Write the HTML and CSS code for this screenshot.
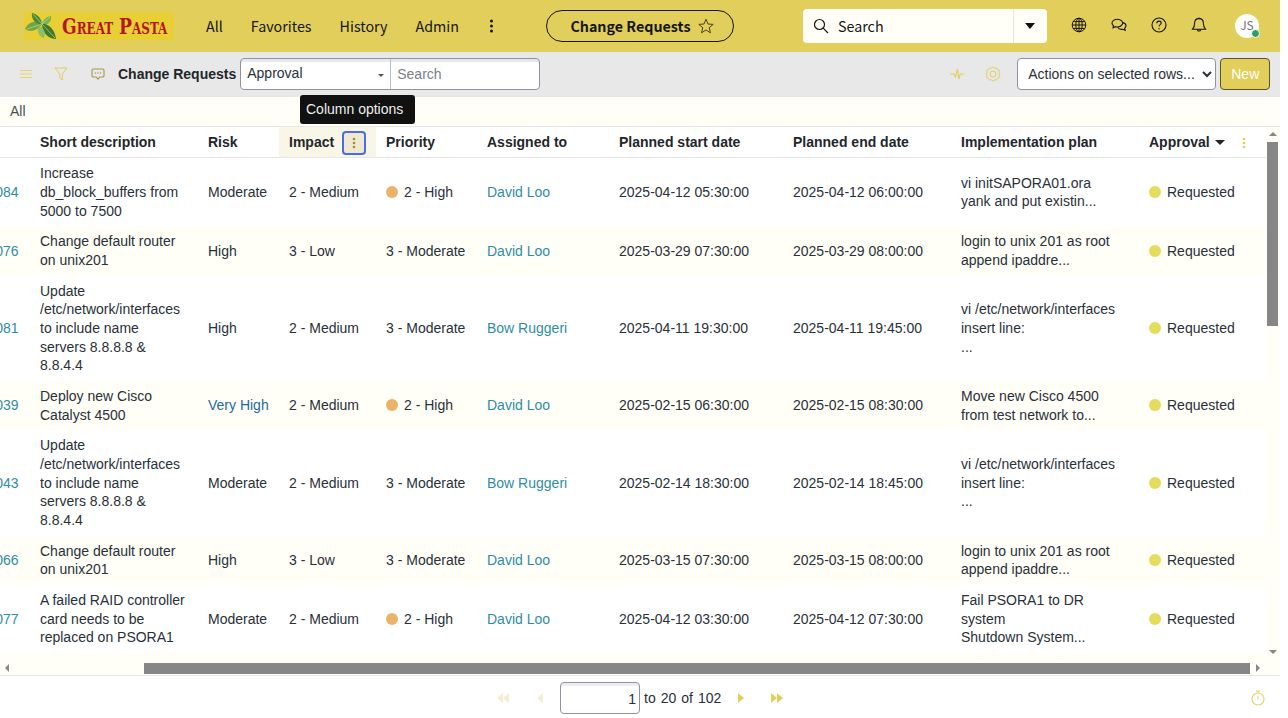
FILE: index.html
```html
<!DOCTYPE html>
<html lang="en">
<head>
    <meta charset="UTF-8">
    <title>Change Requests</title>
    <link rel="stylesheet" href="styles.css">
</head>
<body>
<div class="page">
    <!-- Top navigation -->
    <header class="topbar">
        <div class="logo">
            <svg class="logo-leaf" viewBox="0 0 34 28" width="34" height="28">
                <path d="M1 17 C5 9 12 8 18 12 C14 18 7 21 1 17Z" fill="#6fa544"/>
                <path d="M8 1 C13 2 18 6 18 13 C12 12 7 8 8 1Z" fill="#4f8a33"/>
                <path d="M27 4 C28 9 24 13 18 14 C18 9 21 5 27 4Z" fill="#7cb052"/>
                <path d="M18 12 C25 11 31 18 32 27 C25 27 18 21 18 12Z" fill="#3f7a2b"/>
                <path d="M15 14 C20 15 22 21 20 26 C15 25 12 19 15 14Z" fill="#8fbf62"/>
                <path d="M3 17 L18 12 M18 12 L31 26 M18 12 L26 5 M18 12 L9 2" stroke="#cfe0a6" stroke-width="0.6" fill="none"/>
            </svg>
            <span class="logo-text">Great Pasta</span>
        </div>
        <nav class="nav">
            <span>All</span>
            <span>Favorites</span>
            <span>History</span>
            <span>Admin</span>
            <svg class="nav-dots" viewBox="0 0 9 16" width="9" height="16" fill="#151515">
                <circle cx="4.5" cy="3" r="1.5"/><circle cx="4.5" cy="8" r="1.5"/><circle cx="4.5" cy="13" r="1.5"/>
            </svg>
        </nav>
        <div class="pill">
            <span>Change Requests</span>
            <svg viewBox="0 0 16 16" width="16" height="16" fill="none" stroke="#4a4320" stroke-width="1">
                <path d="M8 1.2 L10 6 L15.2 6.4 L11.2 9.7 L12.5 14.8 L8 12 L3.5 14.8 L4.8 9.7 L0.8 6.4 L6 6Z"/>
            </svg>
        </div>
        <div class="global-search">
            <svg viewBox="0 0 16 16" width="16" height="16" fill="none" stroke="#151515" stroke-width="1.2">
                <circle cx="6.5" cy="6.5" r="5"/><path d="M10.2 10.2 L15 15"/>
            </svg>
            <span class="global-search-text">Search</span>
            <span class="global-search-drop"><i class="caret-black"></i></span>
        </div>
        <div class="top-icons">
            <svg viewBox="0 0 16 16" width="16" height="16" fill="none" stroke="#151515" stroke-width="1">
                <circle cx="8" cy="8" r="6.8"/><ellipse cx="8" cy="8" rx="3.2" ry="6.8"/>
                <path d="M8 1.2 V14.8 M1.2 8 H14.8 M2.2 4.6 H13.8 M2.2 11.4 H13.8"/>
            </svg>
            <svg viewBox="0 0 16 16" width="16" height="16" fill="none" stroke="#151515" stroke-width="1.1">
                <path d="M6.5 2.2 C3.4 2.2 1 3.9 1 6.1 C1 7.2 1.6 8.1 2.5 8.8 L2 10.8 L4.6 9.7 C6.8 10.2 10 9.5 11.4 7.2 C12.6 5 10 2.2 6.5 2.2Z"/>
                <path d="M11.6 5.6 C13.6 6 15 7.2 15 8.8 C15 9.8 14.5 10.6 13.7 11.2 L14.2 13.2 L11.8 12.2 C9.8 12.6 7.6 12 6.8 10.1"/>
            </svg>
            <svg viewBox="0 0 16 16" width="16" height="16" fill="none" stroke="#151515" stroke-width="1.1">
                <circle cx="8" cy="8" r="7"/>
                <path d="M5.8 6.2 C5.8 4.9 6.8 4.1 8 4.1 C9.3 4.1 10.2 5 10.2 6 C10.2 7.6 8 7.7 8 9.6"/>
                <circle cx="8" cy="11.8" r="0.7" fill="#151515" stroke="none"/>
            </svg>
            <svg viewBox="0 0 16 16" width="16" height="16" fill="none" stroke="#151515" stroke-width="1.1">
                <path d="M8 1.6 C5.2 1.6 3.6 3.6 3.6 6.2 C3.6 9.4 2.8 10.8 1.6 12.2 H14.4 C13.2 10.8 12.4 9.4 12.4 6.2 C12.4 3.6 10.8 1.6 8 1.6Z"/>
                <path d="M6.4 12.4 C6.4 14.6 9.6 14.6 9.6 12.4 M8 0.6 V1.6"/>
            </svg>
        </div>
        <div class="avatar">
            JS
            <span class="avatar-badge"></span>
        </div>
    </header>

    <!-- List toolbar -->
    <div class="toolbar">
        <svg class="tool-menu" viewBox="0 0 14 10" width="14" height="10" stroke="#e4d36f" stroke-width="1">
            <path d="M1 1.5 H13 M1 5 H13 M1 8.5 H13"/>
        </svg>
        <svg class="tool-filter" viewBox="0 0 14 14" width="14" height="14" fill="none" stroke="#e2ce5a" stroke-width="1">
            <path d="M1 1 H13 L8.4 7 V13 L5.8 11 V7Z"/>
        </svg>
        <svg class="tool-chat" viewBox="0 0 14 14" width="14" height="14" fill="none" stroke="#a8944a" stroke-width="1.1">
            <path d="M2.5 2 H11.5 Q13 2 13 3.5 V9 Q13 10 11.5 10 H8.8 L7 12.2 L5.2 10 H2.5 Q1 10 1 9 V3.5 Q1 2 2.5 2Z"/>
            <circle cx="4.4" cy="6" r="0.7" fill="#a8944a" stroke="none"/><circle cx="7" cy="6" r="0.7" fill="#a8944a" stroke="none"/><circle cx="9.6" cy="6" r="0.7" fill="#a8944a" stroke="none"/>
        </svg>
        <span class="tool-title">Change Requests</span>
        <div class="field-group">
            <div class="field-select">Approval<i class="caret-small"></i></div>
            <input class="field-input" type="text" placeholder="Search">
        </div>
        <svg class="tool-pulse" viewBox="0 0 16 16" width="16" height="16" fill="none" stroke="#e2ce5a" stroke-width="1.1">
            <path d="M1 8 H5 L6.5 11 L8.5 3 L9.8 13 L11.2 8 H15"/>
        </svg>
        <svg class="tool-gear" viewBox="0 0 16 16" width="16" height="16" fill="none" stroke="#e2ce5a" stroke-width="1">
            <path d="M8 1 L9.6 2.2 L11.6 1.9 L12.5 3.6 L14.3 4.4 L14 6.4 L15 8 L14 9.6 L14.3 11.6 L12.5 12.4 L11.6 14.1 L9.6 13.8 L8 15 L6.4 13.8 L4.4 14.1 L3.5 12.4 L1.7 11.6 L2 9.6 L1 8 L2 6.4 L1.7 4.4 L3.5 3.6 L4.4 1.9 L6.4 2.2Z"/>
            <circle cx="8" cy="8" r="3"/>
        </svg>
        <select class="actions">
            <option>Actions on selected rows...</option>
        </select>
        <button class="btn-new">New</button>
    </div>

    <div class="breadcrumb">All</div>
    <div class="tooltip">Column options</div>

    <!-- Records -->
    <div class="list-area">
        <div class="table-clip">
            <table class="records">
                <colgroup>
                    <col class="c-num"><col class="c-desc"><col class="c-risk"><col class="c-impact"><col class="c-prio">
                    <col class="c-user"><col class="c-date"><col class="c-date2"><col class="c-plan"><col class="c-appr">
                </colgroup>
                <thead>
                    <tr>
                        <th></th>
                        <th>Short description</th>
                        <th>Risk</th>
                        <th class="th-active">
                            <div class="th-inner">Impact
                                <span class="col-btn"><svg viewBox="0 0 4 12" width="4" height="12" fill="#a8893a"><circle cx="2" cy="2" r="1.3"/><circle cx="2" cy="6" r="1.3"/><circle cx="2" cy="10" r="1.3"/></svg></span>
                            </div>
                        </th>
                        <th>Priority</th>
                        <th>Assigned to</th>
                        <th>Planned start date</th>
                        <th>Planned end date</th>
                        <th>Implementation plan</th>
                        <th>
                            <div class="th-inner th-appr">Approval <i class="caret-sort"></i>
                                <svg class="th-dots" viewBox="0 0 4 12" width="4" height="12" fill="#e2ce5a"><circle cx="2" cy="2" r="1.3"/><circle cx="2" cy="6" r="1.3"/><circle cx="2" cy="10" r="1.3"/></svg>
                            </div>
                        </th>
                    </tr>
                </thead>
                <tbody>
                    <tr>
                        <td><a>CHG0000084</a></td>
                        <td>Increase db_block_buffers from 5000 to 7500</td>
                        <td>Moderate</td>
                        <td>2 - Medium</td>
                        <td><i class="dot dot-high"></i>2 - High</td>
                        <td><a>David Loo</a></td>
                        <td>2025-04-12 05:30:00</td>
                        <td>2025-04-12 06:00:00</td>
                        <td>vi initSAPORA01.ora<br>yank and put existin...</td>
                        <td><i class="dot dot-req"></i>Requested</td>
                    </tr>
                    <tr>
                        <td><a>CHG0000076</a></td>
                        <td>Change default router on unix201</td>
                        <td>High</td>
                        <td>3 - Low</td>
                        <td>3 - Moderate</td>
                        <td><a>David Loo</a></td>
                        <td>2025-03-29 07:30:00</td>
                        <td>2025-03-29 08:00:00</td>
                        <td>login to unix 201 as root<br>append ipaddre...</td>
                        <td><i class="dot dot-req"></i>Requested</td>
                    </tr>
                    <tr>
                        <td><a>CHG0000081</a></td>
                        <td>Update /etc/network/interfaces to include name servers 8.8.8.8 &amp; 8.8.4.4</td>
                        <td>High</td>
                        <td>2 - Medium</td>
                        <td>3 - Moderate</td>
                        <td><a>Bow Ruggeri</a></td>
                        <td>2025-04-11 19:30:00</td>
                        <td>2025-04-11 19:45:00</td>
                        <td>vi /etc/network/interfaces<br>insert line:<br>...</td>
                        <td><i class="dot dot-req"></i>Requested</td>
                    </tr>
                    <tr>
                        <td><a>CHG0000039</a></td>
                        <td>Deploy new Cisco Catalyst 4500</td>
                        <td><a class="link-dark">Very High</a></td>
                        <td>2 - Medium</td>
                        <td><i class="dot dot-high"></i>2 - High</td>
                        <td><a>David Loo</a></td>
                        <td>2025-02-15 06:30:00</td>
                        <td>2025-02-15 08:30:00</td>
                        <td>Move new Cisco 4500<br>from test network to...</td>
                        <td><i class="dot dot-req"></i>Requested</td>
                    </tr>
                    <tr>
                        <td><a>CHG0000043</a></td>
                        <td>Update /etc/network/interfaces to include name servers 8.8.8.8 &amp; 8.8.4.4</td>
                        <td>Moderate</td>
                        <td>2 - Medium</td>
                        <td>3 - Moderate</td>
                        <td><a>Bow Ruggeri</a></td>
                        <td>2025-02-14 18:30:00</td>
                        <td>2025-02-14 18:45:00</td>
                        <td>vi /etc/network/interfaces<br>insert line:<br>...</td>
                        <td><i class="dot dot-req"></i>Requested</td>
                    </tr>
                    <tr>
                        <td><a>CHG0000066</a></td>
                        <td>Change default router on unix201</td>
                        <td>High</td>
                        <td>3 - Low</td>
                        <td>3 - Moderate</td>
                        <td><a>David Loo</a></td>
                        <td>2025-03-15 07:30:00</td>
                        <td>2025-03-15 08:00:00</td>
                        <td>login to unix 201 as root<br>append ipaddre...</td>
                        <td><i class="dot dot-req"></i>Requested</td>
                    </tr>
                    <tr>
                        <td><a>CHG0000077</a></td>
                        <td>A failed RAID controller card needs to be replaced on PSORA1</td>
                        <td>Moderate</td>
                        <td>2 - Medium</td>
                        <td><i class="dot dot-high"></i>2 - High</td>
                        <td><a>David Loo</a></td>
                        <td>2025-04-12 03:30:00</td>
                        <td>2025-04-12 07:30:00</td>
                        <td>Fail PSORA1 to DR<br>system<br>Shutdown System...</td>
                        <td><i class="dot dot-req"></i>Requested</td>
                    </tr>
                </tbody>
            </table>
        </div>
        <div class="vbar">
            <i class="arrow-up"></i>
            <div class="vbar-track"><div class="vbar-thumb"></div></div>
            <i class="arrow-down"></i>
        </div>
    </div>
    <div class="hbar">
        <i class="arrow-left"></i>
        <div class="hbar-track"><div class="hbar-thumb"></div></div>
        <i class="arrow-right"></i>
    </div>

    <!-- Pagination -->
    <footer class="pager">
        <div class="pager-main">
            <span class="pg-btn pg-first"><i class="tri-left faded"></i><i class="tri-left faded"></i></span>
            <span class="pg-btn pg-prev"><i class="tri-left faded"></i></span>
            <input class="pg-input" type="text" value="1">
            <span class="pg-text">to</span>
            <span class="pg-text">20</span>
            <span class="pg-text">of</span>
            <span class="pg-text">102</span>
            <span class="pg-btn pg-next"><i class="tri-right"></i></span>
            <span class="pg-btn pg-last"><i class="tri-right"></i><i class="tri-right"></i></span>
        </div>
        <svg class="pg-timer" viewBox="0 0 14 16" width="14" height="16" fill="none" stroke="#e8d675" stroke-width="1.2">
            <circle cx="7" cy="9" r="6"/><path d="M5 1.2 H9 M7 1.2 V3 M7 6 V9.5"/>
        </svg>
    </footer>
</div>
</body>
</html>
```

FILE: styles.css
```css
/* Page frame */
body {
    margin: 0;
    background-color: #fff;
    font-family: "Liberation Sans", Arial, sans-serif;
    font-size: 14px;
    color: #293038;
    overflow: hidden;
}
.page {
    position: relative;
    width: 1280px;
    height: 718px;
    display: flex;
    flex-direction: column;
}

/* Top navigation */
.topbar {
    height: 52px;
    flex: none;
    display: flex;
    align-items: center;
    background-color: #e2ce5a;
    font-family: "Noto Sans CJK SC", "Noto Sans", sans-serif;
    font-size: 14.3px;
    color: #151515;
}
.logo {
    width: 150px;
    height: 28px;
    margin-left: 24px;
    display: flex;
    align-items: center;
    background-color: #e8cf35;
}
.logo-leaf {
    flex: none;
    margin-left: 0;
}
.logo-text {
    margin-left: 4px;
    font-family: "DejaVu Serif Condensed", "DejaVu Serif", serif;
    font-weight: bold;
    font-variant: small-caps;
    font-size: 23px;
    line-height: 28px;
    color: #b5161d;
    white-space: nowrap;
    transform: scaleX(0.83);
    transform-origin: left center;
}
.nav {
    margin-left: 32px;
    display: flex;
    align-items: center;
    gap: 28px;
    line-height: 24px;
}
.pill {
    width: 188px;
    height: 32px;
    box-sizing: border-box;
    margin-left: 50px;
    padding-left: 4px;
    display: flex;
    align-items: center;
    justify-content: center;
    gap: 7px;
    border: 1px solid #151515;
    border-radius: 16px;
    font-weight: bold;
    line-height: 24px;
}
.global-search {
    width: 244px;
    height: 34px;
    box-sizing: border-box;
    margin-left: 69px;
    padding-left: 10px;
    display: flex;
    align-items: center;
    background-color: #fffef7;
    border-radius: 4px;
}
.global-search-text {
    margin-left: 9px;
    line-height: 24px;
    flex: 1;
}
.global-search-drop {
    width: 33px;
    height: 34px;
    display: flex;
    align-items: center;
    justify-content: center;
    border-left: 1px solid #e6e6de;
}
.caret-black {
    border-left: 5.5px solid transparent;
    border-right: 5.5px solid transparent;
    border-top: 6px solid #111;
}
.top-icons {
    margin-left: 24px;
    display: flex;
    align-items: center;
    gap: 24px;
    margin-top: -2px;
}
.top-icons svg {
    display: block;
}
.avatar {
    position: relative;
    width: 24px;
    height: 24px;
    margin-left: 28px;
    border-radius: 50%;
    background-color: #fff;
    font-size: 12px;
    line-height: 22px;
    text-align: center;
    color: #6d7177;
}
.avatar-badge {
    position: absolute;
    right: -1px;
    bottom: 0;
    width: 7px;
    height: 7px;
    border: 1px solid #fff;
    border-radius: 50%;
    background-color: #2f9e63;
}

/* List toolbar */
.toolbar {
    height: 45px;
    flex: none;
    box-sizing: border-box;
    padding-bottom: 1px;
    display: flex;
    align-items: center;
    background-color: #e8e8e8;
}
.tool-menu { margin-left: 19px; }
.tool-filter { margin-left: 21px; }
.tool-chat { margin-left: 23px; }
.tool-title {
    margin-left: 13px;
    font-weight: bold;
    color: #22262b;
    white-space: nowrap;
}
.field-group {
    margin-left: 4px;
    width: 300px;
    height: 32px;
    box-sizing: border-box;
    display: flex;
    background-color: #fff;
    border: 1px solid #8f92a6;
    border-radius: 4px;
    box-shadow: inset 0 3px 0 #e8e8e8;
}
.field-select {
    position: relative;
    width: 150px;
    box-sizing: border-box;
    padding: 4px 0 0 6px;
    line-height: 20px;
    border-right: 1px solid #b9bbc6;
}
.caret-small {
    position: absolute;
    right: 6px;
    top: 15px;
    border-left: 3px solid transparent;
    border-right: 3px solid transparent;
    border-top: 3px solid #555;
}
.field-input {
    flex: 1;
    min-width: 0;
    border: none;
    background: transparent;
    padding: 0 0 0 6px;
    font-family: inherit;
    font-size: 14px;
    outline: none;
}
.field-input::placeholder {
    color: #7b8089;
    opacity: 1;
}
.tool-pulse { margin-left: 409px; }
.tool-gear { margin-left: 20px; }
.actions {
    margin-left: 16px;
    width: 199px;
    height: 32px;
    background-color: #fff;
    border: 1px solid #8f92a6;
    border-radius: 4px;
    padding-left: 6px;
    font-family: inherit;
    font-size: 14px;
    color: #293038;
}
.btn-new {
    margin-left: 4px;
    width: 50px;
    height: 32px;
    background-color: #e2ce5a;
    border: 1px solid #5c5326;
    border-radius: 4px;
    font-family: inherit;
    font-size: 14px;
    color: #fff;
}

/* Breadcrumb and tooltip */
.breadcrumb {
    height: 30px;
    flex: none;
    box-sizing: border-box;
    padding: 6px 0 0 10px;
    line-height: 16px;
    background-color: #fffef7;
    border-bottom: 1px solid #e6e6e6;
    color: #4a5058;
}
.tooltip {
    position: absolute;
    left: 300px;
    top: 95px;
    width: 115px;
    height: 29px;
    box-sizing: border-box;
    padding-left: 6px;
    line-height: 28px;
    background-color: #111;
    border-radius: 3px;
    color: #eee;
    white-space: nowrap;
}

/* Table */
.list-area {
    height: 534px;
    flex: none;
    display: flex;
    background-color: #fffef7;
}
.table-clip {
    width: 1266px;
    flex: none;
    overflow: hidden;
}
.records {
    width: 1343px;
    margin-left: -77px;
    border-collapse: collapse;
    table-layout: fixed;
    line-height: 18.67px;
}
.c-num { width: 107px; }
.c-desc { width: 168px; }
.c-risk { width: 81px; }
.c-impact { width: 97px; }
.c-prio { width: 101px; }
.c-user { width: 132px; }
.c-date { width: 174px; }
.c-date2 { width: 168px; }
.c-plan { width: 188px; }
.c-appr { width: 127px; }
.records th {
    height: 31.33px;
    padding: 0 10px;
    box-sizing: border-box;
    text-align: left;
    background-color: #fff;
    box-shadow: inset 0 -1px 0 #e6e6e6;
    color: #22262b;
    white-space: nowrap;
}
.records td {
    padding: 6px 10px;
    background-color: #fff;
    vertical-align: middle;
}
.records tbody tr:nth-child(even) td {
    background-color: #fffef7;
}
.records a {
    color: #2f8da3;
}
.records a.link-dark {
    color: #1f6a9c;
}
.records .th-active {
    background-color: #f9f6e7;
}
.th-inner {
    display: flex;
    align-items: center;
}
.col-btn {
    width: 24px;
    height: 24px;
    box-sizing: border-box;
    margin-left: 8px;
    display: flex;
    align-items: center;
    justify-content: center;
    background-color: #efe9d2;
    border: 2px solid #4a6de5;
    border-radius: 4px;
}
.th-appr {
    gap: 5px;
}
.caret-sort {
    border-left: 5px solid transparent;
    border-right: 5px solid transparent;
    border-top: 5px solid #22262b;
}
.th-dots {
    margin-left: 12px;
}
.dot {
    display: inline-block;
    width: 12px;
    height: 12px;
    margin-right: 6px;
    border-radius: 50%;
    vertical-align: -1px;
}
.dot-high { background-color: #e9b36a; }
.dot-req { background-color: #e4dc5c; }

/* Scrollbars */
.vbar {
    width: 14px;
    flex: none;
    display: flex;
    flex-direction: column;
    align-items: center;
}
.vbar-track {
    flex: 1;
    width: 11px;
    margin-right: 1px;
    padding-top: 6px;
}
.vbar-thumb {
    height: 184px;
    background-color: #868686;
}
.arrow-up, .arrow-down {
    flex: none;
    border-left: 4px solid transparent;
    border-right: 4px solid transparent;
}
.arrow-up {
    margin-top: 5px;
    border-bottom: 4px solid #868686;
}
.arrow-down {
    margin-bottom: 7px;
    border-top: 4px solid #868686;
}
.hbar {
    height: 15px;
    flex: none;
    display: flex;
    align-items: center;
    box-sizing: border-box;
    background-color: #fffef7;
    border-bottom: 1px solid #e6e6e6;
}
.arrow-left, .arrow-right {
    flex: none;
    border-top: 4px solid transparent;
    border-bottom: 4px solid transparent;
}
.arrow-left {
    margin-left: 5px;
    border-right: 4px solid #868686;
}
.arrow-right {
    margin-right: 20px;
    border-left: 4px solid #868686;
}
.hbar-track {
    flex: 1;
    height: 11px;
    padding-left: 135px;
    padding-right: 6px;
}
.hbar-thumb {
    height: 11px;
    background-color: #868686;
}

/* Pagination */
.pager {
    position: relative;
    flex: 1;
    box-sizing: border-box;
    padding-top: 2px;
    display: flex;
    align-items: center;
    background-color: #fff;
}
.pager-main {
    margin-left: 497px;
    display: flex;
    align-items: center;
}
.pg-btn {
    display: flex;
    align-items: center;
}
.tri-left, .tri-right {
    border-top: 5px solid transparent;
    border-bottom: 5px solid transparent;
}
.tri-left {
    border-right: 6px solid #e2ce5a;
}
.tri-right {
    border-left: 6px solid #e2ce5a;
}
.tri-left.faded {
    border-right-color: #f5efcf;
}
.pg-prev { margin-left: 28px; }
.pg-input {
    width: 80px;
    height: 32px;
    box-sizing: border-box;
    margin-left: 17px;
    padding: 1px 3px 0 0;
    text-align: right;
    border: 1px solid #8f92a6;
    border-radius: 4px;
    box-shadow: inset 0 3px 0 #ececec;
    font-family: inherit;
    font-size: 14px;
    color: #293038;
}
.pg-text { margin-left: 4px; }
.pg-text + .pg-text { margin-left: 5px; }
.pg-next { margin-left: 17px; }
.pg-last { margin-left: 27px; }
.pg-timer {
    position: absolute;
    right: 15px;
    top: 14px;
}
```
